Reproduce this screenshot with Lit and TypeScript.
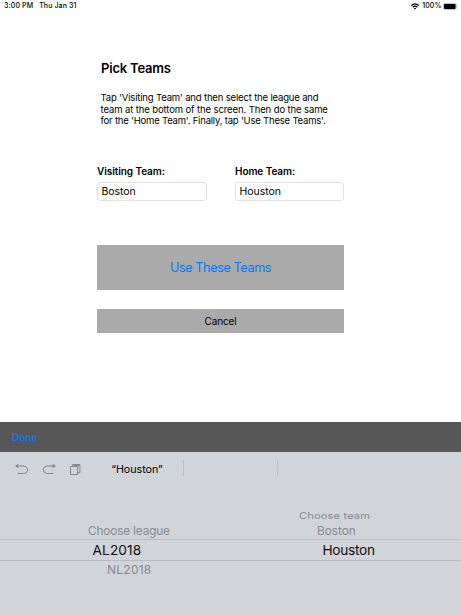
import { LitElement, html, css } from "lit";
import { customElement } from "lit/decorators.js";

@customElement("status-bar")
class StatusBar extends LitElement {
  static styles = css`
    :host { display: flex; align-items: center; height: 12px; padding: 0 3px 0 4px; font-size: 7px; line-height: 12px; font-weight: 500; letter-spacing: .12px; white-space: nowrap; }
    .date { margin-left: 6px; }
    .right { margin-left: auto; display: flex; align-items: center; }
    .wifi { margin-right: 3px; }
    .battery { margin-left: 1.5px; }
    svg { display: block; }
  `;
  render() {
    return html`
      <span>3:00 PM</span><span class="date">Thu Jan 31</span>
      <div class="right">
        <svg class="wifi" width="8" height="7" viewBox="0 0 8 7" fill="none" stroke="#000" stroke-width="1.25">
          <path d="M.3 2.6Q4-.9 7.7 2.6M1.7 4.2Q4 2.2 6.3 4.2" />
          <path d="M2.7 5.2Q4 4.2 5.3 5.2L4 6.6Z" fill="#000" stroke="none" />
        </svg>
        <span>100%</span>
        <svg class="battery" width="15" height="7" viewBox="0 0 15 7">
          <rect x=".4" y=".4" width="12.8" height="6.2" rx="1.8" fill="none" stroke="#888" stroke-width=".6" />
          <rect x="1" y="1" width="11.6" height="5" rx="1.1" />
          <path d="M14 2.5Q15 3.5 14 4.5Z" fill="#777" />
        </svg>
      </div>`;
  }
}

@customElement("team-picker")
class TeamPicker extends LitElement {
  static styles = css`
    :host { display: block; height: 131px; padding-top: 24px; box-sizing: border-box; color: #888b90; white-space: nowrap; }
    .wheels { display: grid; grid-template-columns: 231px 230px; }
    .wheel { display: grid; grid-template-rows: 15px 16px 22px 16px; align-items: center; }
    .row { display: flex; align-items: center; height: 100%; }
    .selected { border: solid #b9bcc1; border-width: 1px 0; box-sizing: border-box; color: #111; font-size: 13.7px; height: 22px; }
    .league { padding-left: 88px; font-size: 11.8px; letter-spacing: -.15px; }
    .al { padding-left: 92.5px; letter-spacing: .1px; }
    .nl { padding-left: 107px; font-size: 12px; letter-spacing: .25px; }
    .choose-team { padding-left: 68px; font-size: 11px; }
    .squash { display: inline-block; transform: scaleY(.78); letter-spacing: .2px; }
    .boston { padding-left: 86px; font-size: 11.8px; }
    .houston { padding-left: 91.5px; letter-spacing: -.3px; }
  `;
  render() {
    return html`
      <div class="wheels">
        <div class="wheel">
          <div class="row"></div>
          <div class="row league">Choose league</div>
          <div class="row selected al">AL2018</div>
          <div class="row nl">NL2018</div>
        </div>
        <div class="wheel">
          <div class="row choose-team"><span class="squash">Choose team</span></div>
          <div class="row boston">Boston</div>
          <div class="row selected houston">Houston</div>
          <div class="row"></div>
        </div>
      </div>`;
  }
}

@customElement("app-root")
class AppRoot extends LitElement {
  static styles = css`
    :host { display: flex; flex-direction: column; height: 615px; width: 461px; overflow: hidden; background: #fff; color: #000; font-family: Inter, "Liberation Sans", sans-serif; }
    * { box-sizing: border-box; }
    main { height: 410px; width: 247px; margin-left: 97px; padding-top: 48px; }
    h1 { margin: 0 0 0 4px; font-size: 13px; line-height: 16px; font-weight: 600; letter-spacing: -.2px; }
    .intro { margin: 16px 0 0 3.5px; font-size: 9.5px; line-height: 11.5px; white-space: nowrap; height: 35px; }
    .intro span { display: block; letter-spacing: -.165px; }
    .intro span:nth-child(2) { letter-spacing: -.11px; }
    .intro span:nth-child(3) { letter-spacing: -.2px; }
    .fields { display: grid; grid-template-columns: 110px 109px; column-gap: 28px; margin-top: 38px; }
    label { display: block; font-size: 10px; line-height: 13px; font-weight: 600; letter-spacing: -.07px; white-space: nowrap; height: 17px; }
    .field { height: 19px; border: 1px solid #e2e2e2; border-radius: 3px; padding-left: 3.5px; font-size: 10.5px; line-height: 17px; letter-spacing: -.05px; }
    .primary, .cancel { display: flex; align-items: center; justify-content: center; background: #aaa; }
    .primary { height: 45px; margin-top: 44px; color: #007aff; font-size: 12.7px; letter-spacing: -.42px; }
    .cancel { height: 24px; margin-top: 19px; font-size: 10px; letter-spacing: -.15px; }
    .toolbar { height: 30px; background: #585858; display: flex; align-items: center; padding-left: 12px; color: #007aff; font-size: 10.3px; font-weight: 500; letter-spacing: -.15px; }
    .keyboard { flex: 1; background: #d1d4d9; }
    .suggestions { height: 32px; display: flex; align-items: center; padding: 3px 0 0 14px; }
    .icons { display: flex; gap: 12.5px; width: 76px; }
    .word { width: 93px; text-align: center; font-size: 10.7px; padding-left: 1px; }
    .divider { width: 1px; height: 16px; background: #bfc2c7; margin: -3px 92.5px 0 0; }
  `;
  render() {
    return html`
      <status-bar></status-bar>
      <main>
        <h1>Pick Teams</h1>
        <div class="intro">
          <span>Tap 'Visiting Team' and then select the league and</span>
          <span>team at the bottom of the screen. Then do the same</span>
          <span>for the 'Home Team'. Finally, tap 'Use These Teams'.</span>
        </div>
        <div class="fields">
          <div><label>Visiting Team:</label><div class="field">Boston</div></div>
          <div><label>Home Team:</label><div class="field">Houston</div></div>
        </div>
        <div class="primary">Use These Teams</div>
        <div class="cancel">Cancel</div>
      </main>
      <div class="toolbar">Done</div>
      <div class="keyboard">
        <div class="suggestions">
          <div class="icons">
            <svg width="15" height="13" viewBox="0 0 15 13" fill="none" stroke="#85888c"><path d="M2 3H9.8A3.75 3.75 0 0 1 9.8 10.5H3.6" /><path d="M1 3L4.3.7V5.3Z" fill="#85888c" stroke="none" /></svg>
            <svg width="15" height="13" viewBox="0 0 15 13" fill="none" stroke="#85888c"><path d="M12 3H5.2A3.75 3.75 0 0 0 5.2 10.5H11.4" /><path d="M14 3L10.7.7V5.3Z" fill="#85888c" stroke="none" /></svg>
            <svg width="13" height="13" viewBox="0 0 13 13" fill="none" stroke="#85888c"><path d="M1.5 3.5H8.5V11.5H1.5Z" /><path d="M3.5 3V1.5H10.9V9.7H9.2" /><path d="M4.5 1H10.5V3H9.5V4H8.5V3H4.5Z" fill="#85888c" stroke="none" /></svg>
          </div>
          <div class="word">“Houston”</div>
          <div class="divider"></div>
          <div class="divider"></div>
        </div>
        <team-picker></team-picker>
      </div>`;
  }
}
